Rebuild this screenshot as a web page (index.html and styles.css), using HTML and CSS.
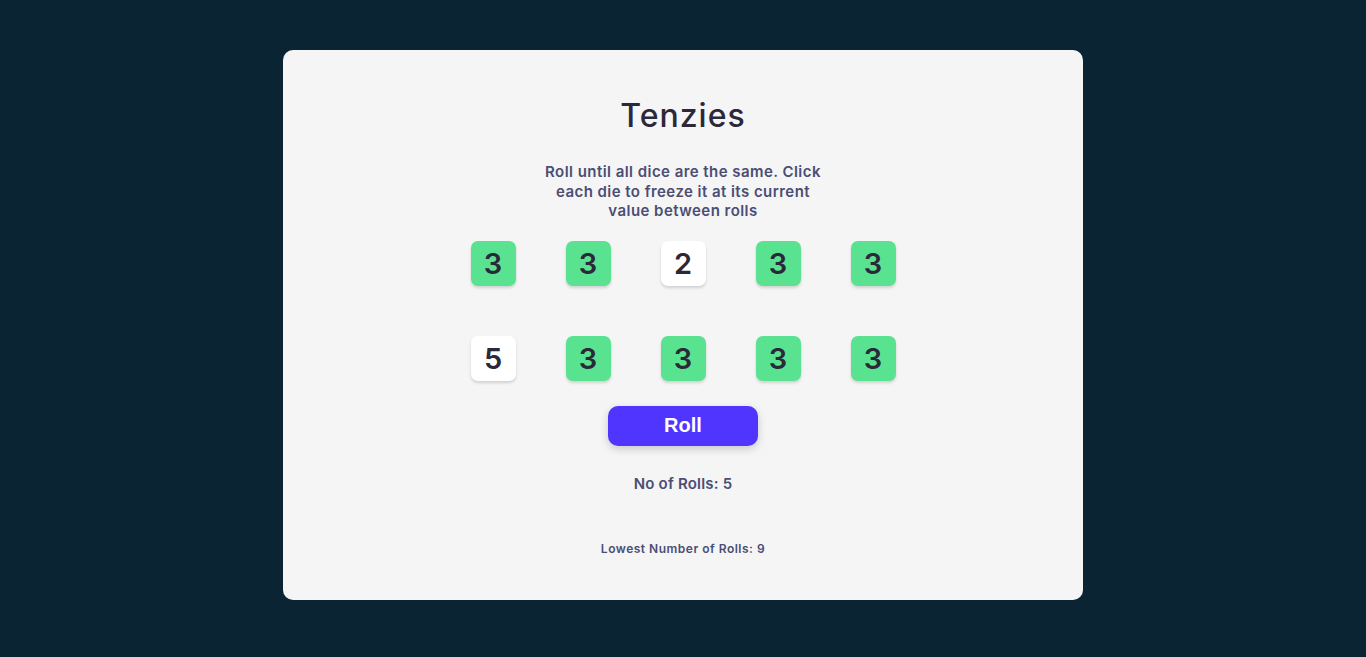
FILE: index.html
```html
<!DOCTYPE html>
<html>
<head>
<meta charset="utf-8">
<link rel="stylesheet" href="styles.css">
<title>Tenzies</title>
</head>
<body>
<main class="card">
  <h1 class="title">Tenzies</h1>
  <p class="instructions">Roll until all dice are the same. Click each die to freeze it at its current value between rolls</p>
  <div class="dice">
    <div class="die held">3</div>
    <div class="die held">3</div>
    <div class="die">2</div>
    <div class="die held">3</div>
    <div class="die held">3</div>
    <div class="die">5</div>
    <div class="die held">3</div>
    <div class="die held">3</div>
    <div class="die held">3</div>
    <div class="die held">3</div>
  </div>
  <button class="roll">Roll</button>
  <p class="count">No of Rolls: 5</p>
  <p class="best">Lowest Number of Rolls: 9</p>
</main>
</body>
</html>
```
FILE: styles.css
```css
* { box-sizing: border-box; }
html, body { margin: 0; padding: 0; }
body {
  background: #0B2434;
  min-height: 657px;
  display: flex;
  justify-content: center;
  align-items: flex-start;
  padding-top: 50px;
  font-family: Inter, "Open Sans", sans-serif;
}
.card {
  width: 800px;
  height: 550px;
  background: #F5F5F5;
  border-radius: 10px;
  display: flex;
  flex-direction: column;
  align-items: center;
  padding-top: 44px;
}
.title {
  margin: 0;
  font-size: 32px;
  line-height: 44px;
  font-weight: 500;
  color: #2B283A;
  letter-spacing: 1px;
}
.instructions {
  margin: 24px 0 0;
  width: 288px;
  text-align: center;
  font-size: 15px;
  line-height: 19.5px;
  font-weight: 600;
  letter-spacing: 0.45px;
  color: #4A4E74;
}
.dice {
  margin-top: 20px;
  display: grid;
  grid-template-columns: repeat(5, 45px);
  column-gap: 50px;
  row-gap: 50px;
}
.die {
  width: 45px;
  height: 45px;
  border-radius: 7px;
  background: #FFFFFF;
  box-shadow: 0 2px 3px rgba(0,0,0,0.15);
  display: flex;
  justify-content: center;
  align-items: center;
  font-size: 29px;
  font-weight: 600;
  color: #2B283A;
}
.die.held { background: #59E391; }
.roll {
  margin-top: 25px;
  width: 150px;
  height: 40px;
  border: none;
  border-radius: 10px;
  background: #5035FF;
  color: #FFFFFF;
  font-family: "Liberation Sans", Arial, sans-serif;
  font-size: 20px;
  font-weight: 700;
  box-shadow: 0 3px 8px rgba(0,0,0,0.18);
}
.count {
  margin: 28px 0 0;
  font-size: 15px;
  font-weight: 600;
  letter-spacing: 0.2px;
  color: #4A4E74;
}
.best {
  margin: 48px 0 0;
  font-size: 12px;
  font-weight: 600;
  letter-spacing: 0.5px;
  color: #4A4E74;
}
```
